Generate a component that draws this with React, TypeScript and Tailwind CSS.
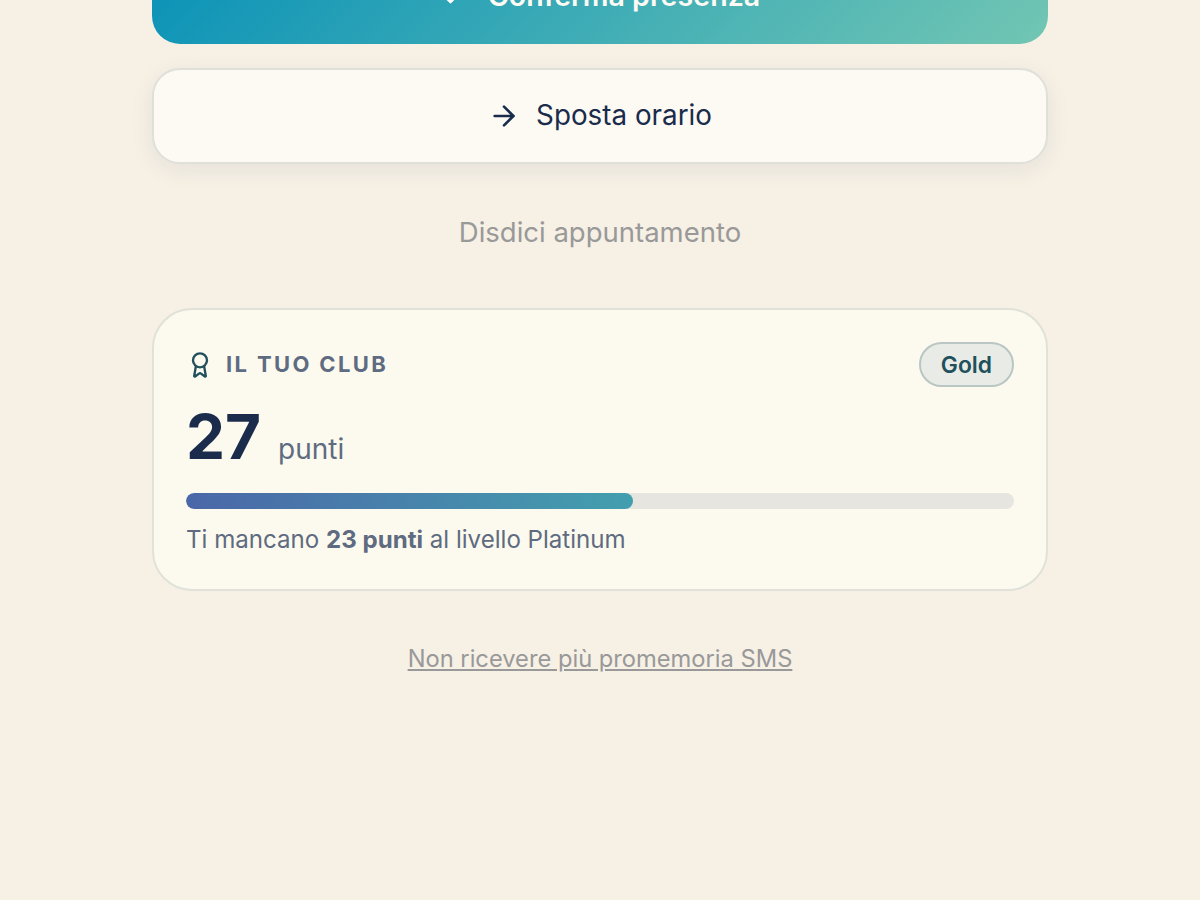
import { ArrowRight, Award, Check } from "lucide-react";

export default function App() {
    return (
        <div className="h-[900px] overflow-hidden bg-[#f6f0e5] font-['Inter',sans-serif]">
            <div className="mx-auto flex w-[896px] flex-col -mt-[52px]">
                <button className="flex h-[96px] w-full items-center justify-center gap-5 rounded-[28px] bg-[linear-gradient(135deg,#0891b8,#72c6b3)] text-[28.6px] font-semibold text-[#fdfbf4]">
                    <Check size={28} strokeWidth={2.5} />
                    Conferma presenza
                </button>

                <button className="mt-6 flex h-[96px] w-full items-center justify-center gap-4 rounded-[28px] border-2 border-[#e0e0da] bg-[#fcfaf3] text-[27.8px] font-[430] text-[#1a2b4c] shadow-[0_6px_24px_rgba(26,43,76,0.07)]">
                    <ArrowRight size={32} strokeWidth={2} />
                    Sposta orario
                </button>

                <button className="mt-[48px] text-center text-[27.5px] leading-[40px] text-[#999999]">
                    Disdici appuntamento
                </button>

                <section className="mt-[56px] rounded-[40px] border-2 border-[#e0e1d8] bg-[#fcfaef] px-8 pt-8 pb-8">
                    <div className="flex items-center justify-between">
                        <div className="flex items-center gap-3">
                            <Award size={28} strokeWidth={2} className="text-[#21505c]" />
                            <span className="text-[22px] font-bold tracking-[0.107em] text-[#5f6b80]">
                                IL TUO CLUB
                            </span>
                        </div>
                        <span className="rounded-full border-2 border-[#b9c6c4] bg-[#e9ece6] px-5 py-[5.5px] text-[22.8px] leading-[30px] font-semibold text-[#21505c]">
                            Gold
                        </span>
                    </div>

                    <div className="mt-[10px] flex items-baseline gap-[17px]">
                        <span className="text-[62px] leading-[80px] font-bold text-[#1a2b4c]">27</span>
                        <span className="text-[28px] text-[#5f6b80]">punti</span>
                    </div>

                    <div className="mt-4 h-4 w-full overflow-hidden rounded-full bg-[#e6e5e0]">
                        <div className="h-full w-[54%] rounded-full bg-gradient-to-r from-[#4a67a8] to-[#429fae]" />
                    </div>

                    <p className="mt-[14px] text-[24.1px] leading-[34px] text-[#5f6b80]">
                        Ti mancano <strong className="font-bold">23 punti</strong> al livello Platinum
                    </p>
                </section>

                <a className="mt-[50px] text-center text-[23.7px] leading-[36px] text-[#999999] underline">
                    Non ricevere più promemoria SMS
                </a>
            </div>
        </div>
    );
}
